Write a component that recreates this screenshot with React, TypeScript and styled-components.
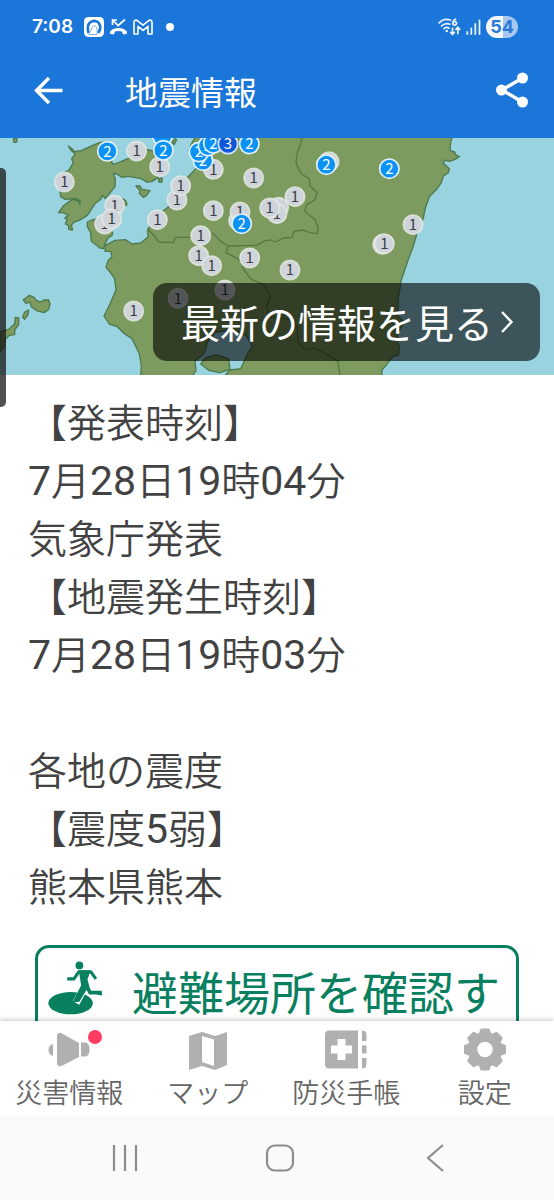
import React from 'react';
import styled, { createGlobalStyle } from 'styled-components';

const GlobalStyle = createGlobalStyle`
  * { box-sizing: border-box; }
  body {
    margin: 0;
    background: #ffffff;
    font-family: Roboto, "Noto Sans CJK JP", sans-serif;
    color: #424242;
  }
  button {
    border: 0;
    padding: 0;
    margin: 0;
    background: none;
    font: inherit;
    color: inherit;
    cursor: pointer;
  }
  a { color: inherit; text-decoration: none; }
`;

const Screen = styled.div`
  display: flex;
  flex-direction: column;
  height: 100vh;
  overflow: hidden;
`;

const Header = styled.header`
  background: #1b76da;
  color: #ffffff;
`;

const StatusBar = styled.div`
  display: flex;
  align-items: center;
  justify-content: space-between;
  height: 44px;
  padding: 10px 36px 0 32px;
`;

const StatusGroup = styled.div<{ $gap: number }>`
  display: flex;
  align-items: center;
  gap: ${(p) => p.$gap}px;
`;

const Clock = styled.time`
  margin-right: 6px;
  font-family: Inter, Roboto, sans-serif;
  font-size: 19px;
  font-weight: 600;
  line-height: 24px;
`;

const Dot = styled.span`
  width: 8px;
  height: 8px;
  margin-left: 8px;
  border-radius: 50%;
  background: #ffffff;
`;

const Battery = styled.span`
  width: 32px;
  border-radius: 11px;
  background: linear-gradient(90deg, #f4f8fd 54%, #a6c8f0 54%);
  color: #2a7bd6;
  font-family: Inter, Roboto, sans-serif;
  font-size: 18px;
  font-weight: 700;
  line-height: 22px;
  text-align: center;
`;

const AppBar = styled.div`
  display: flex;
  align-items: center;
  height: 94px;
  padding: 0 26px 2px 32px;
`;

const IconButton = styled.button`
  display: flex;
`;

const Title = styled.h1`
  flex: 1;
  margin: 0 0 0 61px;
  padding-top: 7px;
  font-size: 33px;
  font-weight: 400;
  line-height: 48px;
`;

const Content = styled.main`
  flex: 1;
  min-height: 0;
  overflow: hidden;
`;

const MapPanel = styled.section`
  position: relative;
  height: 237px;
  background: #99d3e0;
`;

const MapSvg = styled.svg`
  display: block;
  width: 100%;
  height: 100%;
`;

const LatestButton = styled.button`
  position: absolute;
  right: 14px;
  bottom: 14px;
  display: flex;
  align-items: center;
  gap: 7px;
  height: 78px;
  padding: 0 26px 0 28px;
  border-radius: 14px;
  background: rgba(0, 0, 0, 0.6);
  color: #ffffff;
  font-size: 39px;
  line-height: 58px;
`;

const LatestLabel = styled.span`
  padding-top: 6px;
`;

const EdgeHandle = styled.div`
  position: fixed;
  left: 0;
  top: 168px;
  width: 6px;
  height: 239px;
  border-radius: 0 5px 5px 0;
  background: rgba(20, 20, 20, 0.74);
`;

const Report = styled.section`
  padding: 20px 28px 0;
`;

const Line = styled.p`
  min-height: 58px;
  margin: 0;
  font-size: 39px;
  font-weight: 350;
  line-height: 58px;
`;

const Num = styled.span`
  font-size: 41px;
  font-weight: 400;
  line-height: 1;
`;

const ShelterButton = styled.button`
  display: flex;
  align-items: flex-start;
  width: calc(100% - 70px);
  height: 160px;
  margin: 28px 35px 0;
  padding: 13px 10px;
  border: 3px solid #08805f;
  border-radius: 14px;
  color: #08805f;
  font-size: 46px;
  line-height: 66px;
  text-align: left;
  white-space: nowrap;
`;

const ShelterLabel = styled.span`
  margin-left: 28px;
`;

const TabBar = styled.nav`
  position: relative;
  display: grid;
  grid-template-columns: repeat(4, 1fr);
  height: 95px;
  background: #ffffff;
  box-shadow: 0 -1px 5px rgba(0, 0, 0, 0.24);
`;

const Tab = styled.a`
  display: flex;
  flex-direction: column;
  align-items: center;
  padding-top: 6px;
  color: #666666;
  font-size: 27px;
  font-weight: 350;
  line-height: 44px;
  white-space: nowrap;
`;

const TabIcon = styled.span`
  position: relative;
  display: flex;
  height: 45px;
`;

const Badge = styled.span`
  position: absolute;
  top: 3px;
  right: -12px;
  width: 14px;
  height: 14px;
  border-radius: 50%;
  background: #ff3d63;
`;

const SystemNav = styled.div`
  position: relative;
  display: grid;
  grid-template-columns: repeat(3, 1fr);
  height: 84px;
  padding: 0 41px 0 47px;
  background: #fafafa;
`;

const SystemButton = styled.button`
  display: flex;
  align-items: center;
  justify-content: center;
`;

type Level = 1 | 2 | 3;
type Pin = [x: number, y: number, level: Level];

/* Stations that lie almost wholly under a neighbour: drawn as plain discs. */
const coveredPins: Pin[] = [
  [487, 0, 2], [716, 254, 1], [836, 214, 1], [987, 77, 1], [1148, 325, 1],
];

const pins: Pin[] = [
  [410, 45, 1], [479, 92, 1], [193, 138, 1], [314, 264, 1], [344, 208, 1], [335, 249, 1],
  [472, 251, 1], [531, 192, 1], [542, 149, 1], [401, 525, 1], [534, 487, 1],
  [640, 100, 1], [761, 126, 1], [640, 224, 1], [720, 228, 1],
  [831, 233, 1], [809, 216, 1], [885, 182, 1], [602, 299, 1],
  [596, 359, 1], [635, 389, 1], [749, 366, 1], [870, 402, 1], [675, 462, 1],
  [1153, 323, 1], [1239, 266, 1],
  [322, 46, 2], [490, 43, 2], [609, 74, 2], [597, 48, 2], [624, 30, 2],
  [640, 22, 2], [748, 24, 2], [684, 24, 3], [979, 86, 2], [1168, 98, 2], [725, 263, 2],
];

const pinFill = { 1: '#cfd3da', 2: '#0a92f7', 3: '#0d57d8' };
const pinRing = { 1: 'rgba(230,235,228,.8)', 2: '#e2f1fb', 3: '#d3e6fb' };

function Disc({ x, y, level }: { x: number; y: number; level: Level }) {
  return <circle cx={x} cy={y} r="29" fill={pinFill[level]} stroke={pinRing[level]} strokeWidth="5" />;
}

function SeismicMap() {
  return (
    <MapSvg viewBox="0 6 1662 711" preserveAspectRatio="xMidYMid slice" role="img" aria-label="震度分布図">
      <g fill="#7e9b5f" stroke="#4c7a4c" strokeWidth="4" strokeLinejoin="round">
        <path d="M205 30 216 38 222 46 244 44 270 32 298 20 322 16 330 60 338 85 356 80 378 70 404 60 440 40 458 45 470 58 484 90 474 125 455 137 440 138 424 128 402 124 385 121 366 124 350 114 340 112 346 130 345 152 332 168 316 188 308 178 302 190 285 203 274 220 262 238 240 252 222 258 214 268 218 282 206 280 206 268 196 264 202 250 194 246 206 238 188 230 176 230 190 210 208 196 220 190 236 196 240 207 240 194 224 187 196 190 182 182 180 164 192 110 206 104 220 80 215 68 226 54 212 42Z" />
        <path d="M262 258 276 252 305 246 338 290 336 298 324 306 316 322 310 338 300 336 274 316 272 290 262 272Z" />
        <path d="M330 192 368 188 378 195 381 206 372 210 366 200Z" />
        <path d="M408 150 420 150 426 160 450 164 440 178 430 184 418 172 420 164Z M476 128 486 126 486 138 477 138Z M40 6 51 6 50 18 42 19Z" />
        <path d="M315 346 316 328 345 313 376 311 396 324 422 321 444 303 443 280 472 238 506 212 528 168 545 150 565 122 590 95 605 75 578 62 567 45 574 24 588 0 1358 0 1352 18 1350 44 1364 48 1366 56 1378 62 1365 70 1348 76 1334 72 1330 82 1348 98 1345 110 1330 120 1324 140 1310 160 1288 182 1276 216 1270 246 1250 296 1240 330 1222 378 1204 432 1194 490 1194 540 1212 558 1196 586 1190 612 1198 632 1196 656 1176 664 1160 686 1146 702 1146 722 422 722 424 690 418 654 408 632 396 608 372 592 352 572 328 564 312 540 330 504 348 462 344 428 330 408 318 394 324 374 336 362 332 346Z" />
        <path d="M70 492 88 478 102 484 110 494 122 498 132 492 146 492 150 504 146 520 132 530 110 524 94 512 90 498 78 502Z M68 544 74 528 86 522 84 536 74 550Z M0 588 26 580 44 564 46 544 56 546 56 566 44 582 44 596 28 598 16 610 14 632 0 648Z" />
        <path d="M516 18 526 8 530 12 522 26Z" />
      </g>
      <path fill="#99d3e0" stroke="#4c7a4c" strokeWidth="4" d="M645 588 700 582 738 598 757 630 742 654 730 680 722 698 690 702 672 722 576 722 588 704 585 676 614 650 622 620Z" />
      <path fill="#7e9b5f" stroke="#4c7a4c" strokeWidth="4" d="M602 684 616 666 648 656 686 668 690 700 660 710 628 704Z" />
      <g fill="none" stroke="#55793f" strokeWidth="4" strokeLinejoin="round">
        <path d="M443 280 462 298 476 318 520 320 526 304 568 304 590 300M635 290 645 298 660 314 684 330 770 328 796 314 812 312 826 318 850 306 876 304 882 286 908 282 930 290 952 293 954 274 944 250 914 226 920 206 944 192 952 170 930 150 928 128 904 114 888 82 892 50 900 30 906 6" />
        <path d="M684 330 678 350 694 358 718 370 732 402 754 430 788 444 812 480 800 510 806 542 872 550 890 570 896 622 918 642 940 634 978 654 1014 676 1020 717" />
      </g>
      {coveredPins.map(([x, y, level]) => <Disc key={`${x}-${y}`} x={x} y={y} level={level} />)}
      {pins.map(([x, y, level]) => (
        <g key={`${x}-${y}`}>
          <Disc x={x} y={y} level={level} />
          <text
            x={x}
            y={y + 16}
            textAnchor="middle"
            fontFamily='"Noto Sans CJK JP", sans-serif'
            fontSize="45"
            fill={level === 1 ? '#3c4048' : '#ffffff'}
          >
            {level}
          </text>
        </g>
      ))}
    </MapSvg>
  );
}

function AppBadgeIcon() {
  return (
    <svg width="20" height="20" viewBox="0 0 20 20" aria-hidden="true">
      <rect width="20" height="20" rx="4.500" fill="#fff" />
      <path d="M4.500 16C3.500 12 3.500 8 5.500 6 8 3.200 12.500 3.200 14.800 6c2 3 1.500 7-.6 10" fill="none" stroke="#1b76da" strokeWidth="2.600" />
      <path d="M5 17.500c.5-3 2.200-3.500 3-6.500.5-2.500 3.700-2.800 4.500-.6.8 2.600 1 5 0 7.100Z" fill="#fff" stroke="#1b76da" strokeWidth=".6" />
    </svg>
  );
}

function MissedCallIcon() {
  return (
    <svg width="19" height="18" viewBox="0 0 19 18" aria-hidden="true">
      <path d="M3.500 7V2H8M4 2.500 9.200 7.500 16 1.500" fill="none" stroke="#fff" strokeWidth="1.700" />
      <path d="M1 13.500c4-4.600 13-4.600 17 0v2.300l-4 .7-1-3c-2-.8-5-.8-7 0l-1 3-4-.7Z" fill="#fff" />
    </svg>
  );
}

function MailIcon() {
  return (
    <svg width="20" height="16" viewBox="0 0 20 16" aria-hidden="true">
      <path d="M1 3.500C1 1 3.200.5 4.600 1.800L10 6.200l5.400-4.400C16.800.5 19 1 19 3.500V15h-4V7.400l-5 4-5-4V15H1Z" fill="none" stroke="#fff" strokeWidth="1.600" strokeLinejoin="round" />
    </svg>
  );
}

function WifiIcon() {
  return (
    <svg width="23" height="18" viewBox="0 0 23 18" aria-hidden="true">
      <g fill="none" stroke="#e8f2fd" strokeWidth="1.700" strokeLinecap="round">
        <path d="M1 5C4.500 1.300 8.500.6 12.500 2" />
        <path d="M3.500 8C6 5.600 9 5 12 6.200" />
        <path d="M6 10.600c1.600-1.300 3.400-1.500 5-.4" />
        <path d="M17.500 1.200C15.500 2 14.800 3.600 15 5.200" />
        <circle cx="16.700" cy="5.300" r="1.800" />
        <path d="M14.500 10v6M12.600 14.300l1.900 2 1.900-2M19.800 15.500v-6M17.900 11.300l1.900-2 1.900 2" />
      </g>
      <circle cx="8.800" cy="13" r="1.300" fill="#e8f2fd" />
    </svg>
  );
}

function SignalIcon() {
  return (
    <svg width="15" height="16" viewBox="0 0 15 16" aria-hidden="true">
      <path d="M1.300 15v-2M5.300 15V9.500M9.300 15V5M13.500 15V1.300" stroke="#e8f2fd" strokeWidth="1.800" strokeLinecap="round" />
    </svg>
  );
}

function BackIcon() {
  return (
    <svg width="32" height="32" viewBox="0 0 32 32" aria-hidden="true">
      <path d="M30.500 16.500H5M17 4 4.500 16.500 17 29" fill="none" stroke="#fff" strokeWidth="3.400" strokeLinejoin="miter" />
    </svg>
  );
}

function ShareIcon() {
  return (
    <svg width="32" height="36" viewBox="0 0 32 36" aria-hidden="true">
      <path d="M26.500 6 6 18l20.500 12" fill="none" stroke="#fff" strokeWidth="3.400" />
      <circle cx="26.500" cy="6" r="5.500" fill="#fff" />
      <circle cx="5.500" cy="18" r="5.500" fill="#fff" />
      <circle cx="26.500" cy="30" r="5.500" fill="#fff" />
    </svg>
  );
}

function ChevronIcon() {
  return (
    <svg width="14" height="24" viewBox="0 0 14 24" aria-hidden="true">
      <path d="M2 2l9.500 10L2 22" fill="none" stroke="#fff" strokeWidth="2.400" />
    </svg>
  );
}

function ShelterIcon() {
  return (
    <svg width="56" height="54" viewBox="147 96 162 160" aria-hidden="true">
      <ellipse cx="212" cy="221" rx="66" ry="33" fill="#08805f" />
      <path d="M252 176 228 220" stroke="#fff" strokeWidth="22" strokeLinecap="butt" />
      <circle cx="238" cy="109" r="11.500" fill="#08805f" />
      <g fill="none" stroke="#08805f" strokeLinejoin="round">
        <path d="M202 149H222L236 128H272L287 149" strokeWidth="9" />
        <path d="M246 168 222 215H236L262 172" strokeWidth="5" fill="#08805f" />
        <path d="M256 164 270 190H304" strokeWidth="11" strokeLinejoin="miter" />
      </g>
      <path d="M236 124H272L262 150 268 174 244 172Z" fill="#08805f" />
      <path d="M302 184 306 198 290 196Z" fill="#08805f" />
    </svg>
  );
}

function MegaphoneIcon() {
  return (
    <svg width="42" height="45" viewBox="0 0 42 45" aria-hidden="true" fill="#b0b0b0">
      <path d="M5 17v12C2 28.500.5 26 .5 23S2 17.500 5 17Z" />
      <path d="M9 9c0-3 2.500-4 4.500-2.800L31 16v14L13.500 39C11.500 40 9 39 9 36Z" />
      <path d="M33 15.500h4c3 0 4.500 3 4.500 7s-1.500 7-4.500 7h-4Z" />
    </svg>
  );
}

function MapIcon() {
  return (
    <svg width="38" height="45" viewBox="0 0 38 45" aria-hidden="true">
      <path d="M0 9 13 5 26 9 38 5V38L26 43 13 39 0 43Z" fill="#b0b0b0" />
      <path d="M13 9 25 12.500V39L13 35Z" fill="#fff" />
    </svg>
  );
}

function HandbookIcon() {
  return (
    <svg width="42" height="45" viewBox="0 0 42 45" aria-hidden="true" fill="#b0b0b0">
      <path d="M4 3.500H33V41.500H4c-2.500 0-4-1.500-4-4v-30c0-2.500 1.500-4 4-4Z" />
      <path d="M12.500 12h8v6.500H27v8h-6.500V33h-8v-6.500H6v-8h6.500Z" fill="#fff" />
      <path d="M37 3.500c3 0 4.500 1.500 4.500 4V14H37ZM37 18.500h4.500v8H37ZM37 31h4.500v6.500c0 2.500-1.500 4-4.500 4Z" />
    </svg>
  );
}

function GearIcon() {
  return (
    <svg width="42" height="45" viewBox="-21 -22.500 42 45" aria-hidden="true">
      <circle r="12.500" fill="none" stroke="#b0b0b0" strokeWidth="9.500" />
      {[0, 45, 90, 135, 180, 225, 270, 315].map((angle) => (
        <path key={angle} d="M-6.500-15-4.500-20.500Q-4.200-21-3.500-21H3.500Q4.200-21 4.500-20.500L6.500-15Z" fill="#b0b0b0" transform={`rotate(${angle})`} />
      ))}
    </svg>
  );
}

const tabs = [
  { label: '災害情報', icon: <MegaphoneIcon />, alert: true },
  { label: 'マップ', icon: <MapIcon /> },
  { label: '防災手帳', icon: <HandbookIcon /> },
  { label: '設定', icon: <GearIcon /> },
];

const reportLines = [
  '【発表時刻】',
  '7月28日19時04分',
  '気象庁発表',
  '【地震発生時刻】',
  '7月28日19時03分',
  '',
  '各地の震度',
  '【震度5弱】',
  '熊本県熊本',
];

function ReportLine({ text }: { text: string }) {
  return (
    <Line>
      {text.split(/(\d+)/).map((part, i) => (/\d/.test(part) ? <Num key={i}>{part}</Num> : part))}
    </Line>
  );
}

export default function App() {
  return (
    <>
      <GlobalStyle />
      <Screen>
        <Header>
          <StatusBar>
            <StatusGroup $gap={5}>
              <Clock>7:08</Clock>
              <AppBadgeIcon />
              <MissedCallIcon />
              <MailIcon />
              <Dot />
            </StatusGroup>
            <StatusGroup $gap={5}>
              <WifiIcon />
              <SignalIcon />
              <Battery>54</Battery>
            </StatusGroup>
          </StatusBar>
          <AppBar>
            <IconButton aria-label="戻る"><BackIcon /></IconButton>
            <Title>地震情報</Title>
            <IconButton aria-label="共有"><ShareIcon /></IconButton>
          </AppBar>
        </Header>

        <Content>
          <MapPanel>
            <SeismicMap />
            <LatestButton>
              <LatestLabel>最新の情報を見る</LatestLabel>
              <ChevronIcon />
            </LatestButton>
          </MapPanel>
          <Report>
            {reportLines.map((text, i) => <ReportLine key={i} text={text} />)}
          </Report>
          <ShelterButton>
            <ShelterIcon />
            <ShelterLabel>避難場所を確認す</ShelterLabel>
          </ShelterButton>
        </Content>

        <TabBar>
          {tabs.map(({ label, icon, alert }) => (
            <Tab href="#" key={label}>
              <TabIcon>
                {icon}
                {alert && <Badge />}
              </TabIcon>
              {label}
            </Tab>
          ))}
        </TabBar>

        <SystemNav>
          <SystemButton aria-label="履歴">
            <svg width="26" height="28" viewBox="0 0 26 28" aria-hidden="true">
              <path d="M2 1v26M13 1v26M24 1v26" stroke="#8c8c8c" strokeWidth="2.200" />
            </svg>
          </SystemButton>
          <SystemButton aria-label="ホーム">
            <svg width="30" height="28" viewBox="0 0 30 28" aria-hidden="true">
              <rect x="2" y="1.500" width="26" height="25" rx="8" fill="none" stroke="#8c8c8c" strokeWidth="2.200" />
            </svg>
          </SystemButton>
          <SystemButton aria-label="戻る">
            <svg width="18" height="28" viewBox="0 0 18 28" aria-hidden="true">
              <path d="M17 1 2 14l15 13" fill="none" stroke="#8c8c8c" strokeWidth="2.200" />
            </svg>
          </SystemButton>
        </SystemNav>
        <EdgeHandle />
      </Screen>
    </>
  );
}
